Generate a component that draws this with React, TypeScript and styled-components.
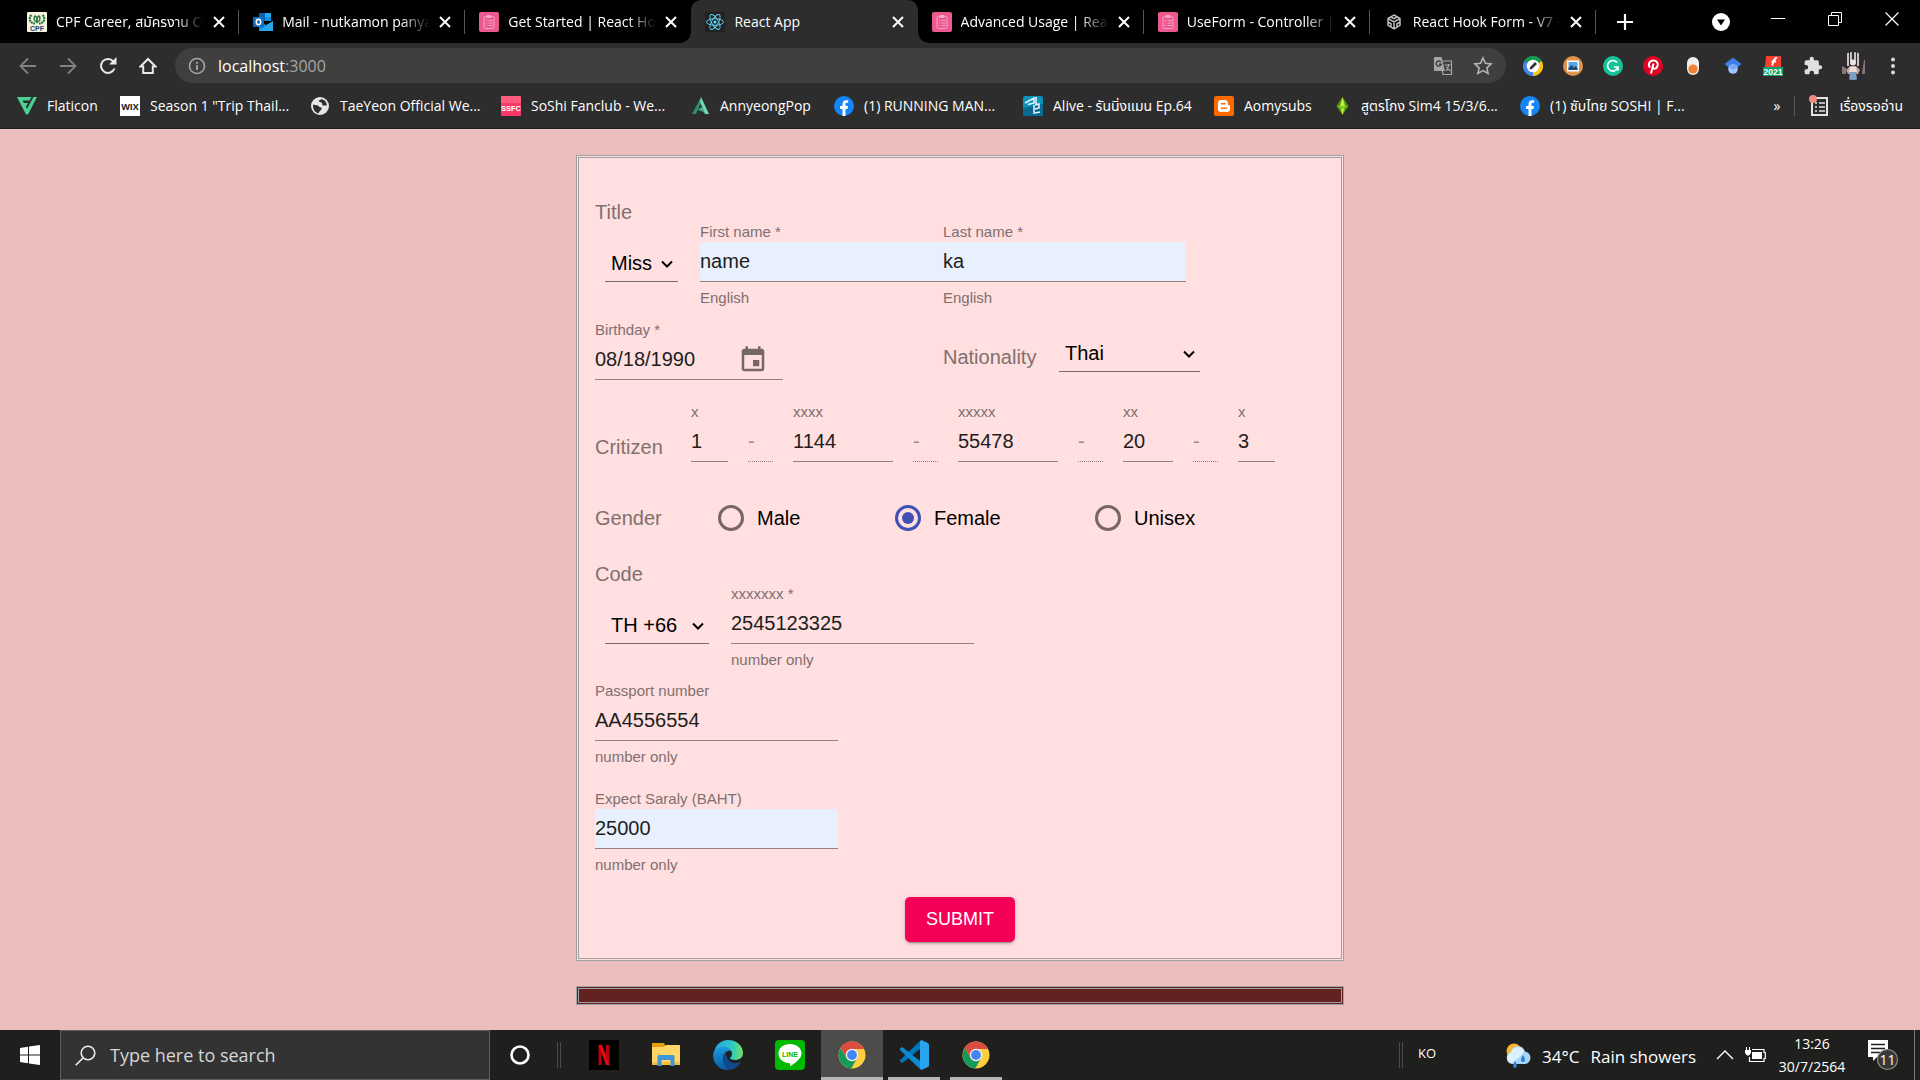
import React from 'react';
import styled, { createGlobalStyle, css } from 'styled-components';

const uiFont = '"Open Sans", "Noto Sans", "Noto Sans Thai", "Liberation Sans", sans-serif';
const formFont = '"Liberation Sans", Arial, sans-serif';

const GlobalStyle = createGlobalStyle`
  *, *::before, *::after { box-sizing: border-box; }
  body { margin: 0; background: #ebbdbd; font-family: ${formFont}; }
  button, input, select { font: inherit; margin: 0; }
  button { border: 0; padding: 0; background: none; color: inherit; cursor: pointer; }
  a { color: inherit; text-decoration: none; }
  svg { display: block; flex: none; }
`;

const Page = styled.div`
  min-height: 100vh;
  display: flex;
  flex-direction: column;
`;

/* ---------- browser window ---------- */

const Browser = styled.header`
  background: #2d2d2d;
  color: #fff;
  font: 14px/20px ${uiFont};
  border-bottom: 1px solid #1c1c1c;
`;

const TabStrip = styled.div`
  display: flex;
  height: 43px;
  background: #000;
  padding-left: 13px;
`;

const Tabs = styled.div`
  display: flex;
  flex: 0 1 1583px;
  min-width: 0;
`;

const TabItem = styled.div<{ $active?: boolean; $line?: boolean }>`
  flex: 1 1 0;
  min-width: 0;
  display: flex;
  align-items: center;
  gap: 9px;
  padding: 0 14px;
  position: relative;
  ${p => p.$active && css`
    background: #2d2d2d;
    border-radius: 10px 10px 0 0;
    &::before, &::after {
      content: '';
      position: absolute;
      bottom: 0;
      width: 10px;
      height: 10px;
    }
    &::before {
      left: -10px;
      background: radial-gradient(circle at 0 0, transparent 9px, #2d2d2d 10px);
    }
    &::after {
      right: -10px;
      background: radial-gradient(circle at 100% 0, transparent 9px, #2d2d2d 10px);
    }
  `}
  ${p => p.$line && css`
    &::after {
      content: '';
      position: absolute;
      right: 0;
      top: 10px;
      width: 1px;
      height: 24px;
      background: #555;
    }
  `}
`;

const TabTitle = styled.button<{ $fade?: boolean }>`
  flex: 1;
  min-width: 0;
  overflow: hidden;
  white-space: nowrap;
  text-align: left;
  line-height: 26px;
  ${p => p.$fade && css`mask-image: linear-gradient(90deg, #000 80%, transparent 100%);`}
`;

const WindowControls = styled.div`
  margin-left: auto;
  display: flex;
  align-items: flex-start;
`;

const WindowButton = styled.button`
  width: 57px;
  height: 38px;
  display: grid;
  place-items: center;
`;

const NewTab = styled(WindowButton)`
  height: 43px;
`;

const Toolbar = styled.div`
  display: flex;
  align-items: center;
  height: 45px;
  padding: 0 7px 0 8px;
`;

const ToolButton = styled.button`
  width: 40px;
  height: 36px;
  display: grid;
  place-items: center;
`;

const Omnibox = styled.div`
  flex: 1;
  min-width: 0;
  height: 35px;
  margin: 0 7px;
  border-radius: 18px;
  background: #3f3f3f;
  display: flex;
  align-items: center;
  padding: 0 3px 0 13px;
`;

const Address = styled.div`
  flex: 1;
  margin-left: 12px;
  font-size: 16px;
  span { color: #a6a6a6; }
`;

const BookmarkBar = styled.nav`
  height: 40px;
  padding: 0 17px 4px;
  display: flex;
  align-items: center;
`;

const Bookmark = styled.a<{ $w?: number }>`
  display: flex;
  align-items: center;
  gap: 10px;
  width: ${p => (p.$w ? `${p.$w}px` : 'auto')};
  white-space: nowrap;
`;

const BarEnd = styled.div`
  margin-left: auto;
  display: flex;
  align-items: center;
  gap: 14px;
`;

const BarRule = styled.span`
  width: 1px;
  height: 20px;
  background: #5a5a5a;
`;

/* ---------- form ---------- */

const Main = styled.main`
  flex: 1;
  padding: 26px 0 25px;
  display: flex;
  flex-direction: column;
  align-items: center;
  gap: 25px;
`;

const Card = styled.form`
  width: 40%;
  min-width: 740px;
  background: #ffdfdf;
  border: 3px double #a0a0a0;
  padding: 44px 16px 16px;
`;

const FooterBar = styled.footer`
  width: 40%;
  min-width: 740px;
  height: 19px;
  background: #622222;
  border: 3px double #a0a0a0;
`;

const Row = styled.div<{ $gap?: number }>`
  display: flex;
  align-items: flex-end;
  margin-top: ${p => p.$gap ?? 0}px;
`;

const TitledRow = styled(Row)`
  min-height: 106px;
`;

const BirthRow = styled.div`
  display: grid;
  grid-template-columns: 348px 116px 141px;
  align-items: end;
  margin-top: 12px;
`;

const GenderRow = styled.div`
  display: grid;
  grid-template-columns: 123px 177px 200px auto;
  align-items: center;
  height: 52px;
  margin: 30px 0 20px;
`;

const FormLabel = styled.label`
  font-size: 20px;
  line-height: 20px;
  color: #7f706f;
`;

const CitizenLabel = styled(FormLabel)`
  width: 96px;
  padding-bottom: 5px;
`;

const NationalityLabel = styled(FormLabel)`
  padding-bottom: 13px;
`;

const NationalityBox = styled.div`
  padding-bottom: 8px;
`;

const SelectGroup = styled.div`
  display: flex;
  flex-direction: column;
  align-self: stretch;
  gap: 25px;
  margin-right: 22px;
`;

const SelectBox = styled.div<{ $w?: number; $indent?: boolean }>`
  position: relative;
  height: 35px;
  margin-left: ${p => (p.$indent ? 10 : 0)}px;
  width: ${p => (p.$w ? `${p.$w}px` : 'auto')};
  border-bottom: 1px solid #776968;
  svg { position: absolute; right: 4px; top: 10px; pointer-events: none; }
`;

const Select = styled.select`
  display: block;
  appearance: none;
  width: 100%;
  height: 32px;
  border: 0;
  padding: 0 0 0 6px;
  background: transparent;
  font-size: 20px;
  color: #000;
`;

const Field = styled.div<{ $w: number }>`
  width: ${p => p.$w}px;
  flex: none;
`;

const FieldLabel = styled.label`
  display: block;
  height: 20px;
  font-size: 15px;
  line-height: 20px;
  color: #7f706f;
  white-space: nowrap;
`;

const InputLine = styled.div<{ $filled?: boolean; $dotted?: boolean }>`
  display: flex;
  align-items: center;
  height: 40px;
  border-bottom: 1px ${p => (p.$dotted ? 'dotted' : 'solid')} #94817f;
  background: ${p => (p.$filled ? '#e8f0fe' : 'transparent')};
`;

const Input = styled.input`
  flex: 1;
  min-width: 0;
  width: 100%;
  height: 38px;
  border: 0;
  padding: 0;
  background: transparent;
  font-size: 20px;
  color: #211d1d;
  outline: 0;
  &:disabled { color: #9e8a8a; }
`;

const Helper = styled.p`
  margin: 6px 0 0;
  font-size: 15px;
  line-height: 20px;
  color: #7f706f;
`;

const CalendarButton = styled.button`
  width: 60px;
  height: 38px;
  display: grid;
  place-items: center;
`;

const CitizenFields = styled.div`
  display: flex;
  align-items: flex-end;
  gap: 20px;
`;

const Choice = styled.label`
  display: flex;
  align-items: center;
  gap: 13px;
  font-size: 20px;
  line-height: 20px;
  color: #000;
`;

const Radio = styled.input`
  appearance: none;
  width: 26px;
  height: 26px;
  border: 3px solid #766766;
  border-radius: 50%;
  display: grid;
  place-items: center;
  &:checked { border-color: #3f51b5; }
  &:checked::before {
    content: '';
    width: 12px;
    height: 12px;
    border-radius: 50%;
    background: #3f51b5;
  }
`;

const Actions = styled.div`
  display: flex;
  justify-content: center;
  margin-top: 22px;
`;

const Submit = styled.button`
  width: 110px;
  height: 45px;
  border-radius: 5px;
  background: #f50057;
  color: #fff;
  font-size: 18px;
  box-shadow: 0 4px 1px -3px rgba(0,0,0,.2), 0 2px 2px rgba(0,0,0,.14), 0 1px 6px rgba(0,0,0,.12);
`;

/* ---------- taskbar ---------- */

const Taskbar = styled.footer`
  height: 50px;
  display: flex;
  align-items: stretch;
  background: #1f1f1e;
  color: #fff;
  font-family: ${uiFont};
`;

const TaskButton = styled.button<{ $w?: number; $active?: boolean; $open?: boolean }>`
  width: ${p => p.$w ?? 62}px;
  display: grid;
  place-items: center;
  background: ${p => (p.$active ? '#4c4c4b' : 'transparent')};
  position: relative;
  ${p => (p.$active || p.$open) && css`
    &::after {
      content: '';
      position: absolute;
      bottom: 0;
      left: ${p.$active ? 0 : 5}px;
      right: ${p.$active ? 0 : 5}px;
      height: 3px;
      background: #b8b5b5;
    }
  `}
`;

const Search = styled.label`
  width: 430px;
  display: flex;
  align-items: center;
  gap: 14px;
  padding-left: 14px;
  background: #333;
  border: 1px solid #5d5d5d;
`;

const SearchInput = styled.input`
  flex: 1;
  min-width: 0;
  border: 0;
  padding: 0;
  background: transparent;
  outline: 0;
  font-size: 18px;
  color: #d6d6d6;
  &::placeholder { color: #d6d6d6; opacity: 1; }
`;

const Grip = styled.span`
  align-self: center;
  width: 4px;
  height: 26px;
  border: solid #4c4c4c;
  border-width: 0 1px;
`;

const AppList = styled.div`
  display: flex;
  margin: 0 auto 0 12px;
`;

const Language = styled.button`
  width: 48px;
  padding-bottom: 4px;
  font-size: 13px;
`;

const Weather = styled.button`
  display: flex;
  align-items: center;
  gap: 11px;
  margin-left: 54px;
  font-size: 17px;
  padding-top: 2px;
  width: 202px;
  white-space: nowrap;
`;

const Clock = styled.button`
  width: 90px;
  font-size: 14px;
  line-height: 23px;
`;

const DesktopEdge = styled.span`
  width: 6px;
  margin-left: 8px;
  border-left: 1px solid #777;
`;

/* ---------- drawings ---------- */

const CloseX = () => (
  <svg width="12" height="12" viewBox="0 0 12 12"><path d="M1 1l10 10M11 1L1 11" stroke="#fff" strokeWidth="2" /></svg>
);

const Chevron = () => (
  <svg width="14" height="14" viewBox="0 0 14 14"><path d="M2 4.5l5 5 5-5" fill="none" stroke="#000" strokeWidth="2" /></svg>
);

const ClipIcon = () => (
  <svg width="20" height="20" viewBox="0 0 20 20">
    <rect width="20" height="20" rx="2" fill="#ec5990" />
    <g fill="none" stroke="#f7a5c3" strokeWidth="1">
      <rect x="5" y="4.5" width="10" height="12" rx="1.5" />
      <path d="M8 3.5h4v2H8zM7 8.5h1M9.500 8.500h4M7 11h1M9.500 11h4M7 13.500h1M9.500 13.500h4" />
    </g>
  </svg>
);

const CpfIcon = () => (
  <svg width="20" height="20" viewBox="0 0 20 20">
    <rect width="20" height="20" rx="1" fill="#f6f3df" />
    <path d="M4.500 3C1 6 3 11.500 8 11.500M15.500 3c3.500 3 1.500 8.500-3.500 8.500" fill="none" stroke="#26733a" strokeWidth="2.200" strokeDasharray="2 .6" />
    <path d="M6.500 4.500L8 3l2 1.500L12 3l1.500 1.500v4L10 11.500l-3.500-3z" fill="#2f7d43" /><path d="M8 5.500h1v3H8zM11 5.500h1v3h-1z" fill="#f6f3df" />
    <text x="10" y="18.500" textAnchor="middle" fontSize="7" fontWeight="bold" fontFamily="Liberation Sans" fill="#173f70">CPF</text>
  </svg>
);

const OutlookIcon = () => (
  <svg width="20" height="20" viewBox="0 0 20 20">
    <path d="M6 1h12v8H6z" fill="#28a8ea" /><path d="M6 1h6v8H6z" fill="#0364b8" /><path d="M12 5h6v4h-6z" fill="#1490df" />
    <path d="M6 9l7 4 7-4v10H6z" fill="#1490df" /><path d="M6 19L20 9v10z" fill="#28a8ea" />
    <rect y="5" width="11" height="10" rx="1" fill="#0f6cbd" /><ellipse cx="5.500" cy="10" rx="2.200" ry="2.700" fill="none" stroke="#fff" strokeWidth="1.500" />
  </svg>
);

const ReactIcon = () => (
  <svg width="20" height="20" viewBox="0 0 20 20">
    <rect width="20" height="20" rx="1" fill="#222" />
    <g fill="none" stroke="#61dafb" strokeWidth=".9">
      {[0, 60, 120].map(a => <ellipse key={a} cx="10" cy="10" rx="8.500" ry="3.300" transform={`rotate(${a} 10 10)`} />)}
    </g>
    <circle cx="10" cy="10" r="1.600" fill="#61dafb" />
  </svg>
);

const SandboxIcon = () => (
  <svg width="20" height="20" viewBox="0 0 20 20" fill="none" stroke="#bbb" strokeWidth="1.500">
    <path d="M10 3l6 3.400v7L10 17l-6-3.600v-7zM4 6.500l6 3.500 6-3.500M10 10v7M7 5l3 1.700L13 5M4 10l3 1.700V15M16 10l-3 1.700V15" />
  </svg>
);

const FacebookIcon = () => (
  <svg width="20" height="20" viewBox="0 0 20 20">
    <circle cx="10" cy="10" r="10" fill="#1685f5" />
    <path d="M8.500 20v-7H6v-3h2.500V8c0-2.500 1.500-3.800 3.700-3.800l2 .1v2.500h-1.200c-1.200 0-1.500.6-1.500 1.400V10H14l-.5 3h-2v7z" fill="#fff" />
  </svg>
);

const FlaticonIcon = () => (
  <svg width="20" height="20" viewBox="0 0 20 20">
    <path d="M0 1h14.500l-2 3.500H5.500L7 7h4l-2 3.500h-.2L10 13l6.500-12H20L11.500 17.500c-.8 1.500-2.200 1.500-3 0z" fill="#4ad295" />
  </svg>
);

const WixIcon = () => (
  <svg width="20" height="20" viewBox="0 0 20 20">
    <rect width="20" height="20" fill="#fff" />
    <text x="10" y="13.500" textAnchor="middle" fontSize="9" fontWeight="bold" fontFamily="Open Sans" fill="#222">WIX</text>
  </svg>
);

const GlobeIcon = () => (
  <svg width="20" height="20" viewBox="0 0 20 20">
    <circle cx="10" cy="10" r="9" fill="#e6e6e6" />
    <path d="M3.200 8.500l4.500 1c1.300.3 1.300 1.500 2.600 1.700 1.400.2 2 1.300 1 2.300l-1.800 2c-.5.800-.5 1.800-1.800 1.800C4 15.500 2.500 12 3.200 8.500z" fill="#2d2d2d" />
    <path d="M11.500 3.200c-1.500.5-3.300 1.200-2.500 2.300s2.500.3 3 1.500-.3 2.200 1 2.500 2.300-.5 3.800.3C17 6.500 15 3.800 11.500 3.200z" fill="#2d2d2d" />
  </svg>
);

const SsfcIcon = () => (
  <svg width="20" height="20" viewBox="0 0 20 20">
    <rect width="20" height="20" rx="1" fill="#fb3a67" /><rect width="20" height="7" rx="1" fill="#ff5c80" />
    <text x="10" y="15" textAnchor="middle" fontSize="7.500" fontWeight="bold" fontFamily="Liberation Sans" fill="#fff">SSFC</text>
  </svg>
);

const AnnyeongIcon = () => (
  <svg width="18" height="20" viewBox="0 0 18 20">
    <path d="M9 1L0 18h4l5-11z" fill="#2b8c72" /><path d="M9 1l8 17h-4L8 6z" fill="#74d8b0" /><path d="M5 14l5-3 3 7c-2-3-5-4-8-4z" fill="#49b18f" />
  </svg>
);

const AliveIcon = () => (
  <svg width="20" height="20" viewBox="0 0 20 20">
    <rect width="20" height="20" rx="2" fill="#0a93bd" /><path d="M0 12l20-4v12H0z" fill="#0b6a92" />
    <path d="M2 7l9-5v5L5 8.500M13 1v7M11 9v9M12 9l4-1v4l-4 1M12 17l5-1" fill="none" stroke="#e7f5fa" strokeWidth="1.500" />
  </svg>
);

const BloggerIcon = () => (
  <svg width="20" height="20" viewBox="0 0 20 20">
    <rect width="20" height="20" rx="2" fill="#ff6a00" />
    <path d="M7 4h3.500C13 4 14 5.500 14 8c0 1 .3 1.200 1 1.200.8 0 1 .4 1 1V13c0 2-1.200 3-3 3H7c-2 0-3-1.200-3-3V7c0-2 1.200-3 3-3z" fill="#fff" />
    <path d="M7.500 7.800H11M7.500 12.300h5" stroke="#ff6a00" strokeWidth="1.600" strokeLinecap="round" />
  </svg>
);

const SimsIcon = () => (
  <svg width="17" height="20" viewBox="0 0 17 20">
    <path d="M8.500 1L14.500 10 8.500 19 2.500 10z" fill="#4f9c12" /><path d="M8.500 1L11 10 8.500 19 6 10z" fill="#c6ed3b" /><path d="M2.500 10h12l-6 3z" fill="#7fcc1d" />
  </svg>
);

const ReadingIcon = () => (
  <svg width="20" height="22" viewBox="0 0 20 22">
    <rect x="3" y="3" width="15" height="17" fill="none" stroke="#e4e4e4" strokeWidth="2" />
    <path d="M6 8h2M10 8h6M6 12h2M10 12h6M6 16h2M10 16h6" stroke="#e4e4e4" strokeWidth="1.600" /><circle cx="4" cy="4" r="4" fill="#f28b82" />
  </svg>
);

const BackIcon = () => (
  <svg width="18" height="18" viewBox="0 0 18 18" fill="none" stroke="#828282" strokeWidth="1.800"><path d="M17 9H2M9 1.500L1.500 9 9 16.500" /></svg>
);
const ForwardIcon = () => (
  <svg width="18" height="18" viewBox="0 0 18 18" fill="none" stroke="#828282" strokeWidth="1.800"><path d="M1 9h15M9 1.500L16.500 9 9 16.500" /></svg>
);
const ReloadIcon = () => (
  <svg width="18" height="18" viewBox="0 0 18 18"><path d="M15.500 11.500a7 7 0 1 1-1.200-7.200L16 6" fill="none" stroke="#e8e8e8" strokeWidth="2" /><path d="M17.500 0v7.500H10z" fill="#e8e8e8" /></svg>
);
const HomeIcon = () => (
  <svg width="18" height="18" viewBox="0 0 18 18"><path d="M1.500 9.500L9 2l7.500 7.500h-2.700V16H4.200V9.500z" fill="none" stroke="#e8e8e8" strokeWidth="2" /></svg>
);
const InfoIcon = () => (
  <svg width="18" height="18" viewBox="0 0 18 18"><circle cx="9" cy="9" r="7.500" fill="none" stroke="#a6a6a6" strokeWidth="1.600" /><path d="M9 8v5M9 5v1.800" stroke="#a6a6a6" strokeWidth="1.800" /></svg>
);
const TranslateIcon = () => (
  <svg width="20" height="20" viewBox="0 0 20 20">
    <path d="M8 5h10.500v13.500H10z" fill="none" stroke="#a6a6a6" strokeWidth="1.200" /><path d="M2 1h6.500L12 15H2a1 1 0 0 1-1-1V2a1 1 0 0 1 1-1z" fill="#a6a6a6" />
    <path d="M8 6.200a2.600 2.600 0 1 0 .3 2H6" fill="none" stroke="#3f3f3f" strokeWidth="1.400" /><path d="M11.500 9h6M15.500 8v1c0 3-1 4-2.500 6M13.500 11l4 4" fill="none" stroke="#a6a6a6" strokeWidth="1.200" />
  </svg>
);
const StarIcon = () => (
  <svg width="20" height="20" viewBox="0 0 20 20"><path d="M10 2l2.400 5.300 5.800.6-4.300 3.900 1.200 5.700-5.100-2.900-5.100 2.900 1.200-5.700L1.800 7.900l5.800-.6z" fill="none" stroke="#b4b4b4" strokeWidth="1.600" /></svg>
);

const PencilRingIcon = () => (
  <svg width="20" height="20" viewBox="0 0 20 20">
    <path d="M10 10L1.300 5a10 10 0 0 1 17.400 0z" fill="#169b54" /><path d="M10 10l8.700-5A10 10 0 0 1 10 20z" fill="#fcc31e" /><path d="M10 10v10A10 10 0 0 1 1.300 5z" fill="#4285f4" />
    <circle cx="10" cy="10" r="6.300" fill="#fff" /><path d="M6.500 13.500l.6-2.500L12 6l2 2-5 5z" fill="#333" />
  </svg>
);
const PictureIcon = () => (
  <svg width="20" height="20" viewBox="0 0 20 20">
    <circle cx="10" cy="10" r="10" fill="#e0934c" /><rect x="4" y="4.500" width="12" height="11" fill="#fff" /><rect x="5.500" y="6" width="9" height="8" fill="#5aa5e8" />
    <path d="M5.500 14v-2l3-3 2.500 2.500 1.500-1.500 2 2v2z" fill="#244d75" />
  </svg>
);
const GrammarlyIcon = () => (
  <svg width="20" height="20" viewBox="0 0 20 20"><circle cx="10" cy="10" r="10" fill="#15c39a" /><path d="M14 6.500A5.300 5.300 0 1 0 15 11h-4M15 11v3.500" fill="none" stroke="#fff" strokeWidth="1.700" /></svg>
);
const PinterestIcon = () => (
  <svg width="20" height="20" viewBox="0 0 20 20">
    <circle cx="10" cy="10" r="10" fill="#e60023" />
    <path d="M7 11.500C4.500 8.500 6.500 4.500 10.300 4.500c3.500 0 5.200 2.800 4.200 5.600-1 3-4 3.200-4.700 1.500M10.500 7.500L8 17.500" fill="none" stroke="#fff" strokeWidth="2" />
  </svg>
);
const ToggleIcon = () => (
  <svg width="20" height="20" viewBox="0 0 20 20"><rect x="4" y="1" width="12" height="18" rx="6" fill="#eee" /><circle cx="10" cy="13" r="4.600" fill="#f58233" /></svg>
);
const ScholarIcon = () => (
  <svg width="20" height="20" viewBox="0 0 20 20"><path d="M10 1.500L18.500 8 10 15 1.500 8z" fill="#3f7de8" /><circle cx="10" cy="13" r="4.800" fill="#a0c3ff" /><path d="M5.500 11a5 5 0 0 1 9 0L10 14z" fill="#78a8f5" /></svg>
);
const FlashIcon = () => (
  <svg width="20" height="20" viewBox="0 0 20 20">
    <path d="M3 0h15v11H2z" fill="#f4402f" /><path d="M14 1.800c-3 0-3.500 4-5 7.700M8.500 5.500h4.500" stroke="#fff" strokeWidth="2" fill="none" />
    <rect y="11" width="20" height="9" fill="#0fa36b" />
    <text x="10" y="18.500" textAnchor="middle" fontSize="8.500" fontWeight="bold" fontFamily="Liberation Sans" fill="#fff">2021</text>
  </svg>
);
const PuzzleIcon = () => (
  <svg width="20" height="20" viewBox="0 0 24 24">
    <path d="M20.500 11H19V7a2 2 0 0 0-2-2h-4V3.500a2.500 2.500 0 0 0-5 0V5H4a2 2 0 0 0-2 2v3.800h1.500a2.700 2.700 0 0 1 0 5.400H2V20c0 1.100.9 2 2 2h3.800v-1.500a2.700 2.700 0 0 1 5.400 0V22H17a2 2 0 0 0 2-2v-4h1.500a2.500 2.500 0 0 0 0-5z" fill="#e0e0e0" />
  </svg>
);
const AvatarIcon = () => (
  <svg width="28" height="28" viewBox="0 0 28 28">
    <clipPath id="avatarClip"><circle cx="14" cy="14" r="14" /></clipPath>
    <g clipPath="url(#avatarClip)">
      <rect width="28" height="28" fill="#30292d" />
      <path d="M8 0h2v14H8zM11 0h2v9h-2zM15 0h2v9h-2zM18 0h2v14h-2z" fill="#c9c4c9" /><path d="M3 14l4 2v6H3zM25 8h1v14h-3z" fill="#85797d" />
      <circle cx="14" cy="10.500" r="3" fill="#ece6e6" /><path d="M7 18l4-4h6l4 4-2 4H9z" fill="#c4a59a" /><path d="M11 15h6l1 5h-8z" fill="#e8dcd8" /><path d="M11 20h6l1 8h-8z" fill="#7d9fc8" />
    </g>
  </svg>
);
const DotsIcon = () => (
  <svg width="20" height="20" viewBox="0 0 20 20" fill="#d8d8d8"><circle cx="10" cy="3.500" r="2" /><circle cx="10" cy="10" r="2" /><circle cx="10" cy="16.500" r="2" /></svg>
);

const CalendarIcon = () => (
  <svg width="30" height="30" viewBox="0 0 24 24" fill="#766766">
    <path d="M17 12h-5v5h5v-5zM16 1v2H8V1H6v2H5c-1.110 0-1.990.9-1.990 2L3 19c0 1.100.89 2 2 2h14c1.100 0 2-.9 2-2V5c0-1.100-.9-2-2-2h-1V1h-2zm3 18H5V8h14v11z" />
  </svg>
);

const ChromeIcon = () => (
  <svg width="28" height="28" viewBox="0 0 28 28">
    <circle cx="14" cy="14" r="13.500" fill="#ffcd40" />
    <path d="M2.600 7L8.800 17A6 6 0 0 0 19.200 17L13.200 27.500A13.500 13.500 0 0 1 2.600 7z" fill="#149a5b" />
    <path d="M2.600 7A13.500 13.500 0 0 1 26.100 8H14A6 6 0 0 0 8.800 17z" fill="#dc4b40" />
    <circle cx="14" cy="14" r="6.200" fill="#f1f1f1" /><circle cx="14" cy="14" r="4.900" fill="#4285f4" />
  </svg>
);
const NetflixIcon = () => (
  <svg width="30" height="30" viewBox="0 0 30 30"><rect width="30" height="30" fill="#000" /><path d="M9.500 5h3v20l-3 .3zM17 5h3.500v20.300L17 25z" fill="#b1060f" /><path d="M9.500 5h3.600l7.400 20.300-3.500-.3z" fill="#e50914" /></svg>
);
const ExplorerIcon = () => (
  <svg width="30" height="30" viewBox="0 0 30 30">
    <path d="M1 4c0-.6.400-1 1-1h11l2 4H1z" fill="#e5a00d" /><path d="M1 7h12l2-2h13c.6 0 1 .4 1 1v19H1z" fill="#ffd667" /><path d="M1 22h28v3H1z" fill="#f4bd3c" />
    <path d="M6.500 26V16.500c0-.8.700-1.500 1.500-1.500h14c.8 0 1.500.7 1.500 1.500V26h-4v-6h-9v6z" fill="#3f96d8" />
  </svg>
);
const EdgeIcon = () => (
  <svg width="30" height="30" viewBox="0 0 30 30">
    <defs>
      <linearGradient id="edgeTop"><stop offset="0" stopColor="#2aa5df" /><stop offset=".6" stopColor="#2ac6c8" /><stop offset="1" stopColor="#74e25c" /></linearGradient>
      <linearGradient id="edgeSide" x2="0" y2="1"><stop stopColor="#1c9be0" /><stop offset="1" stopColor="#0c59a4" /></linearGradient>
    </defs>
    <path d="M1 13C2 5 8 0 15 0c9 0 15 6 15 13 0 5-4 7-8 7-3 0-5-1-5-2 0-.8 2-1.500 2-4 0-4-4-6.500-8-6.500-5 0-9 2.500-10 5.500z" fill="url(#edgeTop)" />
    <path d="M0 15c0-5 5-8 11-8 3 0 6 1 7 4-5-1-8 3-8 8 0 6 5 11 7 11C7 31 0 24 0 15z" fill="url(#edgeSide)" />
    <path d="M10 19c0-3 1-5 3-6.500 0 6 4 10.500 9 10.500 3 0 4.500-1.500 5.300-1 .5.400-2.300 6-9.300 7.700C13 29 10 24 10 19z" fill="#114a8b" />
  </svg>
);
const LineIcon = () => (
  <svg width="30" height="30" viewBox="0 0 30 30">
    <rect width="30" height="30" rx="4" fill="#00b900" /><path d="M15 4c6.500 0 11.500 4 11.500 9.500 0 3-1.600 5-4 7.300-2.400 2.400-5.500 4.600-7.500 5.400.2-1 .3-2 0-3C8 23 3.500 19 3.500 13.500 3.500 8 8.500 4 15 4z" fill="#fff" />
    <text x="15" y="16.500" textAnchor="middle" fontSize="7" fontWeight="bold" fontFamily="Liberation Sans" fill="#00b900">LINE</text>
  </svg>
);
const CodeIcon = () => (
  <svg width="30" height="30" viewBox="0 0 30 30">
    <path d="M1 20l20-19v8L4 22.500c-.6.500-1.300.4-1.800 0L.8 21c-.4-.4-.3-.7.2-1z" fill="#0075b7" />
    <path d="M1 10L21 29v-8L4 7.500c-.6-.5-1.300-.4-1.800 0L.8 9c-.4.400-.3.700.2 1z" fill="#0b8bd3" />
    <path d="M21 1l1.500-.9L29 3c.6.300 1 .9 1 1.600v20.800c0 .7-.4 1.300-1 1.600l-6.500 2.900L21 29z" fill="#2aa3ef" />
  </svg>
);
const WindowsIcon = () => (
  <svg width="20" height="20" viewBox="0 0 20 20" fill="#fff"><path d="M0 3l8-1.200v7.700H0zM9 1.600L20 0v9.500H9zM0 10.500h8v7.700L0 17zM9 10.500h11V20L9 18.400z" /></svg>
);
const SearchIcon = () => (
  <svg width="21" height="21" viewBox="0 0 21 21" fill="none" stroke="#eee" strokeWidth="1.600"><circle cx="13" cy="8" r="6.800" /><path d="M8 13l-7.300 7.300" /></svg>
);
const RainIcon = () => (
  <svg width="26" height="26" viewBox="0 0 26 26">
    <circle cx="9" cy="8" r="7.500" fill="#f9b52b" /><path d="M7 21a6 6 0 0 1-1.500-11.500A7.500 7.500 0 0 1 20 8.500a6.300 6.300 0 0 1 0 12.500z" fill="#a8d4f7" /><path d="M6 20a5.500 5.500 0 0 1 0-10.500A7 7 0 0 1 19 8c-2 6-8 7-11 12z" fill="#dcf0ff" />
    <path d="M18 12c3 4.500 2.200 7 0 7s-3-2.500 0-7zM10 18c2.800 4 2.200 7 0 7s-2.800-3 0-7z" fill="#2f7fd6" />
  </svg>
);
const BatteryIcon = () => (
  <svg width="21" height="16" viewBox="0 0 21 16">
    <rect x="7" y="5" width="10" height="7" fill="#fff" /><path d="M7 2.500h12v3h1.300v6h-1.300v3H4.500V10" fill="none" stroke="#fff" strokeWidth="1.200" /><path d="M1.500 0v3M4.500 0v3" stroke="#fff" /><path d="M0 3h6v3L4 8.500H2L0 6z" fill="#fff" />
  </svg>
);
const NoteIcon = () => (
  <svg width="34" height="34" viewBox="0 0 34 34">
    <path d="M3 2h20v17H12l-4 4v-4H3z" fill="#fff" /><path d="M6 6.500h14M6 10.500h14M6 14.500h9" stroke="#1f1f1e" strokeWidth="1.400" />
    <circle cx="22.500" cy="21.500" r="10" fill="#383838" stroke="#8a8a8a" strokeWidth="1.200" />
    <text x="22.500" y="26.500" textAnchor="middle" fontSize="14" fontFamily="Open Sans" fill="#fff">11</text>
  </svg>
);

/* ---------- data ---------- */

const tabs = [
  { title: 'CPF Career, สมัครงาน CPF', icon: <CpfIcon />, line: true },
  { title: 'Mail - nutkamon panya', icon: <OutlookIcon />, line: true },
  { title: 'Get Started | React Hook', icon: <ClipIcon /> },
  { title: 'React App', icon: <ReactIcon />, active: true },
  { title: 'Advanced Usage | React', icon: <ClipIcon />, line: true },
  { title: 'UseForm - Controller | R', icon: <ClipIcon />, line: true },
  { title: 'React Hook Form - V7 -', icon: <SandboxIcon />, line: true },
];

const bookmarks = [
  { text: 'Flaticon', icon: <FlaticonIcon />, w: 103 },
  { text: 'Season 1 "Trip Thail...', icon: <WixIcon />, w: 190 },
  { text: 'TaeYeon Official We...', icon: <GlobeIcon />, w: 191 },
  { text: 'SoShi Fanclub - We...', icon: <SsfcIcon />, w: 191 },
  { text: 'AnnyeongPop', icon: <AnnyeongIcon />, w: 142 },
  { text: '(1) RUNNING MAN...', icon: <FacebookIcon />, w: 189 },
  { text: 'Alive - รันนิ่งแมน Ep.64', icon: <AliveIcon />, w: 191 },
  { text: 'Aomysubs', icon: <BloggerIcon />, w: 120 },
  { text: 'สูตรโกง Sim4 15/3/6...', icon: <SimsIcon />, w: 186 },
  { text: '(1) ซับไทย SOSHI | F...', icon: <FacebookIcon />, w: 190 },
];

const extensions: [string, React.ReactNode][] = [
  ['Editor', <PencilRingIcon />], ['Images', <PictureIcon />], ['Grammarly', <GrammarlyIcon />],
  ['Pinterest', <PinterestIcon />], ['Toggle', <ToggleIcon />], ['Scholar', <ScholarIcon />],
  ['Flash', <FlashIcon />], ['Extensions', <PuzzleIcon />], ['Profile', <AvatarIcon />], ['Menu', <DotsIcon />],
];

const citizenParts = [
  { label: 'x', value: '1', w: 37 },
  { label: 'xxxx', value: '1144', w: 100 },
  { label: 'xxxxx', value: '55478', w: 100 },
  { label: 'xx', value: '20', w: 50 },
  { label: 'x', value: '3', w: 37 },
];

type TextFieldProps = {
  id: string; label: string; value: string; width?: number;
  helper?: string; filled?: boolean; children?: React.ReactNode;
};

function TextField({ id, label, value, width = 243, helper, filled, children }: TextFieldProps) {
  return (
    <Field $w={width}>
      <FieldLabel htmlFor={id}>{label}</FieldLabel>
      <InputLine $filled={filled}>
        <Input id={id} defaultValue={value} />
        {children}
      </InputLine>
      {helper && <Helper>{helper}</Helper>}
    </Field>
  );
}

function Dropdown({ id, options, width, indent }: { id: string; options: string[]; width?: number; indent?: boolean }) {
  return (
    <SelectBox $w={width} $indent={indent}>
      <Select id={id}>{options.map(o => <option key={o}>{o}</option>)}</Select>
      <Chevron />
    </SelectBox>
  );
}

function BrowserChrome() {
  return (
    <Browser>
      <TabStrip>
        <Tabs>
          {tabs.map(t => (
            <TabItem key={t.title} $active={t.active} $line={t.line}>
              {t.icon}
              <TabTitle $fade={!t.active}>{t.title}</TabTitle>
              <button aria-label="Close tab"><CloseX /></button>
            </TabItem>
          ))}
        </Tabs>
        <NewTab aria-label="New tab">
          <svg width="16" height="16" viewBox="0 0 16 16"><path d="M8 0v16M0 8h16" stroke="#fff" strokeWidth="2.200" /></svg>
        </NewTab>
        <WindowControls>
          <NewTab aria-label="Search tabs">
            <svg width="18" height="18" viewBox="0 0 18 18"><circle cx="9" cy="9" r="9" fill="#fff" /><path d="M5 6.500h8l-4 6z" fill="#000" /></svg>
          </NewTab>
          <WindowButton aria-label="Minimize"><svg width="14" height="14" viewBox="0 0 14 14"><path d="M0 6.500h14" stroke="#fff" /></svg></WindowButton>
          <WindowButton aria-label="Restore"><svg width="14" height="14" viewBox="0 0 14 14"><path d="M.5 3.500h10v10H.5zM3.500 3V.5h10v10H11" fill="none" stroke="#fff" /></svg></WindowButton>
          <WindowButton aria-label="Close"><svg width="14" height="14" viewBox="0 0 14 14"><path d="M.5.5l13 13M13.500.5l-13 13" stroke="#fff" strokeWidth="1.200" /></svg></WindowButton>
        </WindowControls>
      </TabStrip>
      <Toolbar>
        <ToolButton aria-label="Back"><BackIcon /></ToolButton>
        <ToolButton aria-label="Forward"><ForwardIcon /></ToolButton>
        <ToolButton aria-label="Reload"><ReloadIcon /></ToolButton>
        <ToolButton aria-label="Home"><HomeIcon /></ToolButton>
        <Omnibox>
          <InfoIcon />
          <Address>localhost<span>:3000</span></Address>
          <ToolButton aria-label="Translate"><TranslateIcon /></ToolButton>
          <ToolButton aria-label="Bookmark"><StarIcon /></ToolButton>
        </Omnibox>
        {extensions.map(([name, icon]) => <ToolButton key={name} aria-label={name}>{icon}</ToolButton>)}
      </Toolbar>
      <BookmarkBar>
        {bookmarks.map(b => <Bookmark key={b.text} href="#" $w={b.w}>{b.icon}<span>{b.text}</span></Bookmark>)}
        <BarEnd>
          <button>»</button>
          <BarRule />
          <Bookmark href="#"><ReadingIcon /><span>เรื่องรออ่าน</span></Bookmark>
        </BarEnd>
      </BookmarkBar>
    </Browser>
  );
}

function ApplicationForm() {
  return (
    <Card onSubmit={e => e.preventDefault()}>
      <TitledRow>
        <SelectGroup>
          <FormLabel htmlFor="title">Title</FormLabel>
          <Dropdown id="title" options={['Miss', 'Mr', 'Mrs']} width={73} indent />
        </SelectGroup>
        <TextField id="first" label="First name *" value="name" helper="English" filled />
        <TextField id="last" label="Last name *" value="ka" helper="English" filled />
      </TitledRow>
      <BirthRow>
        <TextField id="birthday" label="Birthday *" value="08/18/1990" width={188}>
          <CalendarButton type="button" aria-label="Choose date"><CalendarIcon /></CalendarButton>
        </TextField>
        <NationalityLabel htmlFor="nationality">Nationality</NationalityLabel>
        <NationalityBox>
          <Dropdown id="nationality" options={['Thai', 'Other']} />
        </NationalityBox>
      </BirthRow>
      <Row $gap={22}>
        <CitizenLabel htmlFor="citizen0">Critizen</CitizenLabel>
        <CitizenFields>
          {citizenParts.map((part, i) => (
            <React.Fragment key={i}>
              {i > 0 && (
                <Field $w={25}>
                  <InputLine $dotted><Input aria-label="Separator" defaultValue="-" disabled /></InputLine>
                </Field>
              )}
              <TextField id={`citizen${i}`} label={part.label} value={part.value} width={part.w} />
            </React.Fragment>
          ))}
        </CitizenFields>
      </Row>
      <GenderRow role="radiogroup" aria-labelledby="gender">
        <FormLabel as="span" id="gender">Gender</FormLabel>
        {['Male', 'Female', 'Unisex'].map(g => (
          <Choice key={g}><Radio type="radio" name="gender" defaultChecked={g === 'Female'} />{g}</Choice>
        ))}
      </GenderRow>
      <TitledRow>
        <SelectGroup>
          <FormLabel htmlFor="code">Code</FormLabel>
          <Dropdown id="code" options={['TH +66', 'KR +82']} width={104} indent />
        </SelectGroup>
        <TextField id="phone" label="xxxxxxx *" value="2545123325" helper="number only" />
      </TitledRow>
      <Row $gap={11}>
        <TextField id="passport" label="Passport number" value="AA4556554" helper="number only" />
      </Row>
      <Row $gap={22}>
        <TextField id="salary" label="Expect Saraly (BAHT)" value="25000" helper="number only" filled />
      </Row>
      <Actions><Submit type="submit">SUBMIT</Submit></Actions>
    </Card>
  );
}

function WindowsTaskbar() {
  return (
    <Taskbar>
      <TaskButton $w={60} aria-label="Start"><WindowsIcon /></TaskButton>
      <Search>
        <SearchIcon />
        <SearchInput placeholder="Type here to search" aria-label="Type here to search" />
      </Search>
      <TaskButton $w={60} aria-label="Cortana">
        <svg width="20" height="20" viewBox="0 0 20 20"><circle cx="10" cy="10" r="8.500" fill="none" stroke="#fff" strokeWidth="2.600" /></svg>
      </TaskButton>
      <AppListGrip />
      <AppList>
        <TaskButton aria-label="Netflix"><NetflixIcon /></TaskButton>
        <TaskButton aria-label="File Explorer"><ExplorerIcon /></TaskButton>
        <TaskButton aria-label="Edge"><EdgeIcon /></TaskButton>
        <TaskButton aria-label="LINE"><LineIcon /></TaskButton>
        <TaskButton aria-label="Chrome" $active><ChromeIcon /></TaskButton>
        <TaskButton aria-label="Code" $open><CodeIcon /></TaskButton>
        <TaskButton aria-label="Chrome profile" $open><ChromeIcon /></TaskButton>
      </AppList>
      <Grip />
      <Language>KO</Language>
      <Weather><RainIcon /><span>34°C</span><span>Rain showers</span></Weather>
      <TaskButton $w={36} aria-label="Show hidden icons">
        <svg width="18" height="10" viewBox="0 0 18 10"><path d="M1 9l8-8 8 8" fill="none" stroke="#fff" strokeWidth="1.400" /></svg>
      </TaskButton>
      <TaskButton $w={24} aria-label="Battery"><BatteryIcon /></TaskButton>
      <Clock>13:26<br />30/7/2564</Clock>
      <TaskButton $w={49} aria-label="Notifications"><NoteIcon /></TaskButton>
      <DesktopEdge />
    </Taskbar>
  );
}

const AppListGrip = styled(Grip)`
  margin-left: 7px;
`;

export default function App() {
  return (
    <Page>
      <GlobalStyle />
      <BrowserChrome />
      <Main>
        <ApplicationForm />
        <FooterBar />
      </Main>
      <WindowsTaskbar />
    </Page>
  );
}
